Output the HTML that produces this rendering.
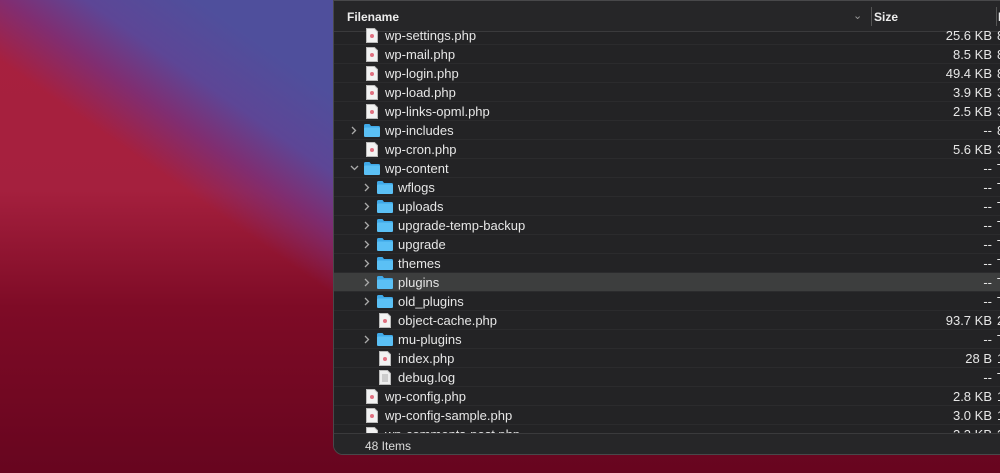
<!DOCTYPE html><html><head><style>
*{margin:0;padding:0;box-sizing:border-box}
body{width:1000px;height:473px;overflow:hidden;position:relative;font-family:"Liberation Sans",sans-serif;
background:
linear-gradient(35deg,rgba(79,79,156,0) 58%,rgba(115,50,130,0.75) 67%,#5d4696 75%,#4f4f9c 86%) 0 0/340px 473px no-repeat,
linear-gradient(180deg,#a8203f 0%,#a5203e 40%,#7e0b26 65%,#67051f 100%);}
.win{position:absolute;left:333px;top:0;width:680px;height:455px;background:#232325;border:1px solid #48484a;border-radius:0 0 10px 10px;overflow:hidden}
.hdr{position:absolute;left:0;top:0;width:100%;height:31px;background:#262628;border-bottom:1px solid #3a3a3c;color:#ececec;font-weight:bold;font-size:12px}
.row{position:absolute;left:0;width:100%;height:19px;border-bottom:1px solid #2b2b2d;color:#e6e6e6;font-size:13px}
.row span{position:absolute;top:2px}
.sz{right:20px;text-align:right}
.m{left:663px}
.sel{background:#3d3e3e}
svg{position:absolute}
.ft{position:absolute;left:0;top:432px;width:100%;height:23px;background:#262628;border-top:1px solid #3a3a3c;color:#ddd;font-size:12px}
</style></head><body>
<div class="win">
<div class="hdr"><span style="position:absolute;left:13px;top:9px">Filename</span>
<span style="position:absolute;left:519px;top:8px;color:#999;font-weight:normal;font-size:11px">⌄</span>
<div style="position:absolute;left:537px;top:6px;width:1px;height:19px;background:#555"></div>
<span style="position:absolute;left:540px;top:9px">Size</span>
<div style="position:absolute;left:662px;top:6px;width:1px;height:19px;background:#555"></div>
<span style="position:absolute;left:664px;top:9px">M</span></div>

<div class="row" style="top:25px"><svg style="left:32px;top:2px" width="12" height="15"><path d="M0.5 0.5h8l3 3v11h-11z" fill="#f2f2f2" stroke="#bbb"/><circle cx="6" cy="8" r="2" fill="#e07080"/></svg><span style="left:51px">wp-settings.php</span><span class="sz">25.6 KB</span><span class="m">8</span></div>
<div class="row" style="top:44px"><svg style="left:32px;top:2px" width="12" height="15"><path d="M0.5 0.5h8l3 3v11h-11z" fill="#f2f2f2" stroke="#bbb"/><circle cx="6" cy="8" r="2" fill="#e07080"/></svg><span style="left:51px">wp-mail.php</span><span class="sz">8.5 KB</span><span class="m">8</span></div>
<div class="row" style="top:63px"><svg style="left:32px;top:2px" width="12" height="15"><path d="M0.5 0.5h8l3 3v11h-11z" fill="#f2f2f2" stroke="#bbb"/><circle cx="6" cy="8" r="2" fill="#e07080"/></svg><span style="left:51px">wp-login.php</span><span class="sz">49.4 KB</span><span class="m">8</span></div>
<div class="row" style="top:82px"><svg style="left:32px;top:2px" width="12" height="15"><path d="M0.5 0.5h8l3 3v11h-11z" fill="#f2f2f2" stroke="#bbb"/><circle cx="6" cy="8" r="2" fill="#e07080"/></svg><span style="left:51px">wp-load.php</span><span class="sz">3.9 KB</span><span class="m">3</span></div>
<div class="row" style="top:101px"><svg style="left:32px;top:2px" width="12" height="15"><path d="M0.5 0.5h8l3 3v11h-11z" fill="#f2f2f2" stroke="#bbb"/><circle cx="6" cy="8" r="2" fill="#e07080"/></svg><span style="left:51px">wp-links-opml.php</span><span class="sz">2.5 KB</span><span class="m">3</span></div>
<div class="row" style="top:120px"><svg style="left:17px;top:5px" width="6" height="9"><path d="M1 1l3.5 3.5L1 8" stroke="#aaa" fill="none" stroke-width="1.3"/></svg><svg style="left:30px;top:3px" width="16" height="13"><path d="M0 1.5q0-1.5 1.5-1.5h4l1.5 2h7.5q1.5 0 1.5 1.5v8q0 1.5-1.5 1.5h-13q-1.5 0-1.5-1.5z" fill="#3fa9e8"/><rect x="0" y="3.5" width="16" height="9.5" rx="1.5" fill="#5bc0f5"/></svg><span style="left:51px">wp-includes</span><span class="sz">--</span><span class="m">8</span></div>
<div class="row" style="top:139px"><svg style="left:32px;top:2px" width="12" height="15"><path d="M0.5 0.5h8l3 3v11h-11z" fill="#f2f2f2" stroke="#bbb"/><circle cx="6" cy="8" r="2" fill="#e07080"/></svg><span style="left:51px">wp-cron.php</span><span class="sz">5.6 KB</span><span class="m">3</span></div>
<div class="row" style="top:158px"><svg style="left:16px;top:6px" width="9" height="6"><path d="M1 1l3.5 3.5L8 1" stroke="#aaa" fill="none" stroke-width="1.3"/></svg><svg style="left:30px;top:3px" width="16" height="13"><path d="M0 1.5q0-1.5 1.5-1.5h4l1.5 2h7.5q1.5 0 1.5 1.5v8q0 1.5-1.5 1.5h-13q-1.5 0-1.5-1.5z" fill="#3fa9e8"/><rect x="0" y="3.5" width="16" height="9.5" rx="1.5" fill="#5bc0f5"/></svg><span style="left:51px">wp-content</span><span class="sz">--</span><span class="m">T</span></div>

<div class="row" style="top:177px"><svg style="left:30px;top:5px" width="6" height="9"><path d="M1 1l3.5 3.5L1 8" stroke="#aaa" fill="none" stroke-width="1.3"/></svg><svg style="left:43px;top:3px" width="16" height="13"><path d="M0 1.5q0-1.5 1.5-1.5h4l1.5 2h7.5q1.5 0 1.5 1.5v8q0 1.5-1.5 1.5h-13q-1.5 0-1.5-1.5z" fill="#3fa9e8"/><rect x="0" y="3.5" width="16" height="9.5" rx="1.5" fill="#5bc0f5"/></svg><span style="left:64px">wflogs</span><span class="sz">--</span><span class="m">T</span></div>
<div class="row" style="top:196px"><svg style="left:30px;top:5px" width="6" height="9"><path d="M1 1l3.5 3.5L1 8" stroke="#aaa" fill="none" stroke-width="1.3"/></svg><svg style="left:43px;top:3px" width="16" height="13"><path d="M0 1.5q0-1.5 1.5-1.5h4l1.5 2h7.5q1.5 0 1.5 1.5v8q0 1.5-1.5 1.5h-13q-1.5 0-1.5-1.5z" fill="#3fa9e8"/><rect x="0" y="3.5" width="16" height="9.5" rx="1.5" fill="#5bc0f5"/></svg><span style="left:64px">uploads</span><span class="sz">--</span><span class="m">T</span></div>
<div class="row" style="top:215px"><svg style="left:30px;top:5px" width="6" height="9"><path d="M1 1l3.5 3.5L1 8" stroke="#aaa" fill="none" stroke-width="1.3"/></svg><svg style="left:43px;top:3px" width="16" height="13"><path d="M0 1.5q0-1.5 1.5-1.5h4l1.5 2h7.5q1.5 0 1.5 1.5v8q0 1.5-1.5 1.5h-13q-1.5 0-1.5-1.5z" fill="#3fa9e8"/><rect x="0" y="3.5" width="16" height="9.5" rx="1.5" fill="#5bc0f5"/></svg><span style="left:64px">upgrade-temp-backup</span><span class="sz">--</span><span class="m">T</span></div>
<div class="row" style="top:234px"><svg style="left:30px;top:5px" width="6" height="9"><path d="M1 1l3.5 3.5L1 8" stroke="#aaa" fill="none" stroke-width="1.3"/></svg><svg style="left:43px;top:3px" width="16" height="13"><path d="M0 1.5q0-1.5 1.5-1.5h4l1.5 2h7.5q1.5 0 1.5 1.5v8q0 1.5-1.5 1.5h-13q-1.5 0-1.5-1.5z" fill="#3fa9e8"/><rect x="0" y="3.5" width="16" height="9.5" rx="1.5" fill="#5bc0f5"/></svg><span style="left:64px">upgrade</span><span class="sz">--</span><span class="m">T</span></div>
<div class="row" style="top:253px"><svg style="left:30px;top:5px" width="6" height="9"><path d="M1 1l3.5 3.5L1 8" stroke="#aaa" fill="none" stroke-width="1.3"/></svg><svg style="left:43px;top:3px" width="16" height="13"><path d="M0 1.5q0-1.5 1.5-1.5h4l1.5 2h7.5q1.5 0 1.5 1.5v8q0 1.5-1.5 1.5h-13q-1.5 0-1.5-1.5z" fill="#3fa9e8"/><rect x="0" y="3.5" width="16" height="9.5" rx="1.5" fill="#5bc0f5"/></svg><span style="left:64px">themes</span><span class="sz">--</span><span class="m">T</span></div>
<div class="row sel" style="top:272px"><svg style="left:30px;top:5px" width="6" height="9"><path d="M1 1l3.5 3.5L1 8" stroke="#aaa" fill="none" stroke-width="1.3"/></svg><svg style="left:43px;top:3px" width="16" height="13"><path d="M0 1.5q0-1.5 1.5-1.5h4l1.5 2h7.5q1.5 0 1.5 1.5v8q0 1.5-1.5 1.5h-13q-1.5 0-1.5-1.5z" fill="#3fa9e8"/><rect x="0" y="3.5" width="16" height="9.5" rx="1.5" fill="#5bc0f5"/></svg><span style="left:64px">plugins</span><span class="sz">--</span><span class="m">T</span></div>
<div class="row" style="top:291px"><svg style="left:30px;top:5px" width="6" height="9"><path d="M1 1l3.5 3.5L1 8" stroke="#aaa" fill="none" stroke-width="1.3"/></svg><svg style="left:43px;top:3px" width="16" height="13"><path d="M0 1.5q0-1.5 1.5-1.5h4l1.5 2h7.5q1.5 0 1.5 1.5v8q0 1.5-1.5 1.5h-13q-1.5 0-1.5-1.5z" fill="#3fa9e8"/><rect x="0" y="3.5" width="16" height="9.5" rx="1.5" fill="#5bc0f5"/></svg><span style="left:64px">old_plugins</span><span class="sz">--</span><span class="m">T</span></div>
<div class="row" style="top:310px"><svg style="left:45px;top:2px" width="12" height="15"><path d="M0.5 0.5h8l3 3v11h-11z" fill="#f2f2f2" stroke="#bbb"/><circle cx="6" cy="8" r="2" fill="#e07080"/></svg><span style="left:64px">object-cache.php</span><span class="sz">93.7 KB</span><span class="m">2</span></div>
<div class="row" style="top:329px"><svg style="left:30px;top:5px" width="6" height="9"><path d="M1 1l3.5 3.5L1 8" stroke="#aaa" fill="none" stroke-width="1.3"/></svg><svg style="left:43px;top:3px" width="16" height="13"><path d="M0 1.5q0-1.5 1.5-1.5h4l1.5 2h7.5q1.5 0 1.5 1.5v8q0 1.5-1.5 1.5h-13q-1.5 0-1.5-1.5z" fill="#3fa9e8"/><rect x="0" y="3.5" width="16" height="9.5" rx="1.5" fill="#5bc0f5"/></svg><span style="left:64px">mu-plugins</span><span class="sz">--</span><span class="m">T</span></div>
<div class="row" style="top:348px"><svg style="left:45px;top:2px" width="12" height="15"><path d="M0.5 0.5h8l3 3v11h-11z" fill="#f2f2f2" stroke="#bbb"/><circle cx="6" cy="8" r="2" fill="#e07080"/></svg><span style="left:64px">index.php</span><span class="sz">28 B</span><span class="m">1</span></div>
<div class="row" style="top:367px"><svg style="left:45px;top:2px" width="12" height="15"><path d="M0.5 0.5h8l3 3v11h-11z" fill="#eee" stroke="#bbb"/><path d="M3 5h6M3 7h6M3 9h6M3 11h6" stroke="#aaa"/></svg><span style="left:64px">debug.log</span><span class="sz">--</span><span class="m">T</span></div>
<div class="row" style="top:386px"><svg style="left:32px;top:2px" width="12" height="15"><path d="M0.5 0.5h8l3 3v11h-11z" fill="#f2f2f2" stroke="#bbb"/><circle cx="6" cy="8" r="2" fill="#e07080"/></svg><span style="left:51px">wp-config.php</span><span class="sz">2.8 KB</span><span class="m">1</span></div>
<div class="row" style="top:405px"><svg style="left:32px;top:2px" width="12" height="15"><path d="M0.5 0.5h8l3 3v11h-11z" fill="#f2f2f2" stroke="#bbb"/><circle cx="6" cy="8" r="2" fill="#e07080"/></svg><span style="left:51px">wp-config-sample.php</span><span class="sz">3.0 KB</span><span class="m">1</span></div>
<div class="row" style="top:424px"><svg style="left:32px;top:2px" width="12" height="15"><path d="M0.5 0.5h8l3 3v11h-11z" fill="#f2f2f2" stroke="#bbb"/></svg><span style="left:51px">wp-comments-post.php</span><span class="sz">2.3 KB</span><span class="m">2</span></div>

<div class="ft"><span style="position:absolute;left:31px;top:5px">48 Items</span></div>
</div>
</body></html>
